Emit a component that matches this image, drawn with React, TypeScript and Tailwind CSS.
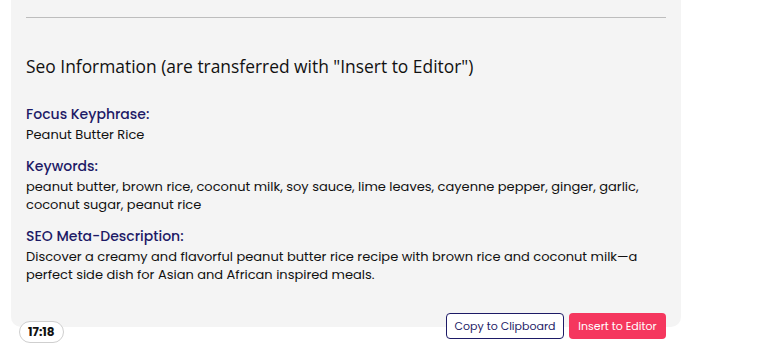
import React from "react";

export default function App() {
  const body = { fontFamily: '"Poppins", "Noto Sans", "Liberation Sans", sans-serif' };
  return (
    <div className="w-[768px] h-[356px] bg-white overflow-hidden relative" style={body}>
      <div className="ml-[11px] w-[670px] bg-[#f4f4f4] rounded-b-[10px] px-[15px] pt-[17px] pb-[43px]">
        <div className="h-px bg-[#bdbdbd]" />
        <h2
          className="mt-[37px] text-[17.4px] leading-[22px] text-[#111]"
          style={{ fontFamily: '"Open Sans", "Noto Sans", sans-serif' }}
        >
          Seo Information (are transferred with "Insert to Editor")
        </h2>
        <div className="mt-[28px] text-[13px] leading-[18px] text-[#111]">
          <div className="font-medium text-[14px] leading-[19px] text-[#1d1a66]">Focus Keyphrase:</div>
          <div className="mt-[2px]">Peanut Butter Rice</div>
          <div className="mt-[13px] font-medium text-[14px] leading-[19px] text-[#1d1a66]">Keywords:</div>
          <div className="mt-[2px]">
            peanut butter, brown rice, coconut milk, soy sauce, lime leaves, cayenne pepper, ginger, garlic,
            <br />
            coconut sugar, peanut rice
          </div>
          <div className="mt-[13px] font-medium text-[14px] leading-[19px] text-[#1d1a66]">SEO Meta-Description:</div>
          <div className="mt-[2px]">
            Discover a creamy and flavorful peanut butter rice recipe with brown rice and coconut milk—a
            <br />
            perfect side dish for Asian and African inspired meals.
          </div>
        </div>
      </div>
      <div className="flex items-start justify-between ml-[19px] w-[647px] -mt-[14px]">
        <div className="mt-[8px] h-[22px] px-[8px] rounded-full border border-[#cfcfcf] bg-white flex items-center text-[12px] font-bold text-[#111]">
          17:18
        </div>
        <div className="flex gap-[5px]">
          <button className="h-[26px] w-[118px] rounded-[4px] border border-[#1d1a66] bg-white text-[11px] text-[#1d1a66]">
            Copy to Clipboard
          </button>
          <button className="h-[26px] w-[97px] rounded-[4px] bg-[#f5375e] text-[11px] text-white">
            Insert to Editor
          </button>
        </div>
      </div>
    </div>
  );
}
